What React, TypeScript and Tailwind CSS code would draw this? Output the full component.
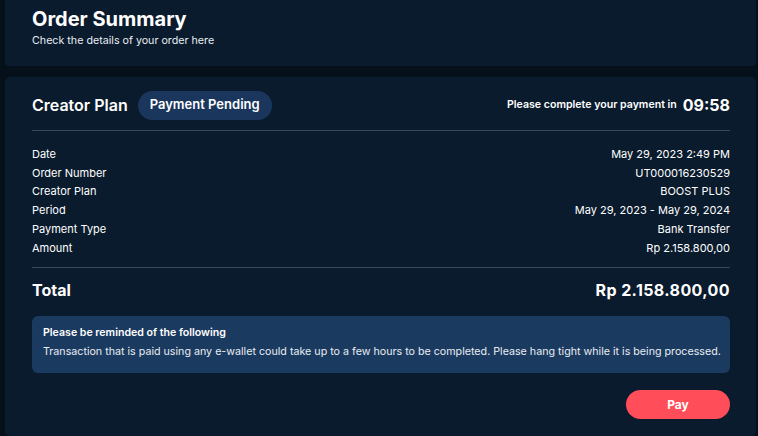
import React from "react";

const rows: [string, string][] = [
  ["Date", "May 29, 2023 2:49 PM"],
  ["Order Number", "UT000016230529"],
  ["Creator Plan", "BOOST PLUS"],
  ["Period", "May 29, 2023 - May 29, 2024"],
  ["Payment Type", "Bank Transfer"],
  ["Amount", "Rp 2.158.800,00"],
];

export default function App() {
  return (
    <div
      className="w-[758px] h-[436px] overflow-hidden bg-[#06101b] text-white flex flex-col gap-[11px] pl-[5px] pr-[2px]"
      style={{ fontFamily: "Inter, 'Noto Sans', sans-serif" }}
    >
      <div className="bg-[#0a1b2d] h-[66px] shrink-0 rounded-b-[4px] pl-[27px] pt-[6px]">
        <h1 className="text-[20px] font-bold leading-[26px]">Order Summary</h1>
        <p className="text-[10.7px] leading-[14px] mt-[2px] text-[#e8edf3]">Check the details of your order here</p>
      </div>
      <div className="bg-[#0a1b2d] flex-1 rounded-[5px] pr-[26px] pl-[27px] pt-[13px] flex flex-col">
        <div className="flex items-center justify-between h-[30px]">
          <div className="flex items-center gap-[10px]">
            <span className="text-[16px] font-semibold">Creator Plan</span>
            <span className="bg-[#1b365d] rounded-full h-[29px] px-[12px] flex items-center text-[13px] font-semibold">
              Payment Pending
            </span>
          </div>
          <div className="flex items-center gap-[6px]">
            <span className="text-[10.6px] font-semibold">Please complete your payment in</span>
            <span className="text-[16px] font-bold">09:58</span>
          </div>
        </div>
        <div className="h-px bg-[#3a4757] mt-[10px]" />
        <div className="flex flex-col mt-[14px]">
          {rows.map(([k, v]) => (
            <div key={k} className="flex justify-between text-[11px] leading-[18.7px]">
              <span>{k}</span>
              <span>{v}</span>
            </div>
          ))}
        </div>
        <div className="h-px bg-[#3a4757] mt-[10px]" />
        <div className="flex justify-between items-center mt-[12px] text-[16px] font-bold leading-[20px]">
          <span>Total</span>
          <span className="tracking-[0.4px]">Rp 2.158.800,00</span>
        </div>
        <div className="bg-[#1b3a5f] rounded-[6px] mt-[16px] px-[11px] pt-[10px] pb-[14px]">
          <p className="text-[10.6px] font-semibold leading-[14px]">Please be reminded of the following</p>
          <p className="text-[10.7px] leading-[14px] mt-[5px] text-[#e8edf3] whitespace-nowrap">
            Transaction that is paid using any e-wallet could take up to a few hours to be completed. Please hang tight while it is being processed.
          </p>
        </div>
        <div className="flex justify-end mt-[17px]">
          <button className="bg-[#ff4d5a] rounded-full w-[104px] h-[29px] text-[12px] font-bold text-white">Pay</button>
        </div>
      </div>
    </div>
  );
}
